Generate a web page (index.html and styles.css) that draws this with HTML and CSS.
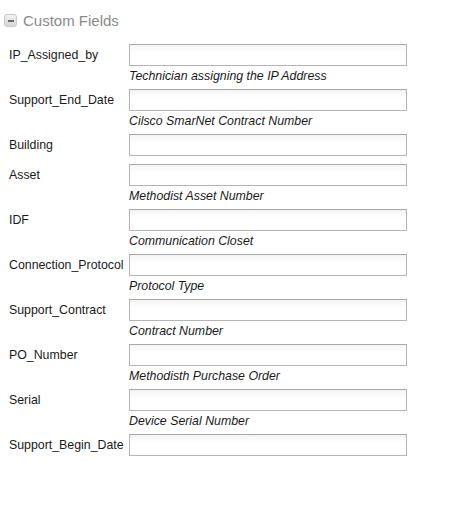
FILE: index.html
```html
<!DOCTYPE html>
<html lang="en">
<head>
<meta charset="UTF-8">
<title>Custom Fields</title>
<link rel="stylesheet" href="styles.css">
</head>
<body>
<div class="section-head">
  <span class="toggle"><span class="minus"></span></span>
  <span class="section-title">Custom Fields</span>
</div>

<div class="fields">
  <div class="field">
    <label>IP_Assigned_by</label>
    <input type="text">
    <div class="desc">Technician assigning the IP Address</div>
  </div>
  <div class="field">
    <label>Support_End_Date</label>
    <input type="text">
    <div class="desc">Cilsco SmarNet Contract Number</div>
  </div>
  <div class="field">
    <label>Building</label>
    <input type="text">
  </div>
  <div class="field">
    <label>Asset</label>
    <input type="text">
    <div class="desc">Methodist Asset Number</div>
  </div>
  <div class="field">
    <label>IDF</label>
    <input type="text">
    <div class="desc">Communication Closet</div>
  </div>
  <div class="field">
    <label>Connection_Protocol</label>
    <input type="text">
    <div class="desc">Protocol Type</div>
  </div>
  <div class="field">
    <label>Support_Contract</label>
    <input type="text">
    <div class="desc">Contract Number</div>
  </div>
  <div class="field">
    <label>PO_Number</label>
    <input type="text">
    <div class="desc">Methodisth Purchase Order</div>
  </div>
  <div class="field">
    <label>Serial</label>
    <input type="text">
    <div class="desc">Device Serial Number</div>
  </div>
  <div class="field">
    <label>Support_Begin_Date</label>
    <input type="text">
  </div>
</div>
</body>
</html>
```

FILE: styles.css
```css
/* ==== base ==== */
*{box-sizing:border-box;margin:0;padding:0}
body{
  font-family:Arial,"Liberation Sans",sans-serif;
  font-size:12.35px;
  color:#1a1a1a;
  background:#fff;
}

/* ==== section header ==== */
.section-head{
  display:flex;align-items:center;gap:6px;
  padding:11px 0 0 4px;
  height:30px;
}
.toggle{
  width:13px;height:13px;border-radius:3px;
  border:1px solid #c8c8c8;
  background:linear-gradient(to bottom,#f2f2f2,#d6d6d6);
  display:flex;align-items:center;justify-content:center;
}
.minus{width:6px;height:2px;background:#6a6a6a}
.section-title{font-size:15px;color:#8a8a8a;line-height:15px}

/* ==== fields ==== */
.fields{padding:14px 0 0 9px}
.field{
  display:grid;
  grid-template-columns:120px 278px;
  align-items:center;
  margin-bottom:8px;
}
.field label{white-space:nowrap}
.field input{
  height:22px;width:278px;
  border:1px solid #b4b4b4;
  border-top-color:#a8a8a8;
  background:linear-gradient(to bottom,#f4f4f4,#fff 8px);
  font:12px Arial,"Liberation Sans",sans-serif;
}
.desc{
  grid-column:2;
  font-style:italic;
  padding-top:5px;
  line-height:10px;
}
```
